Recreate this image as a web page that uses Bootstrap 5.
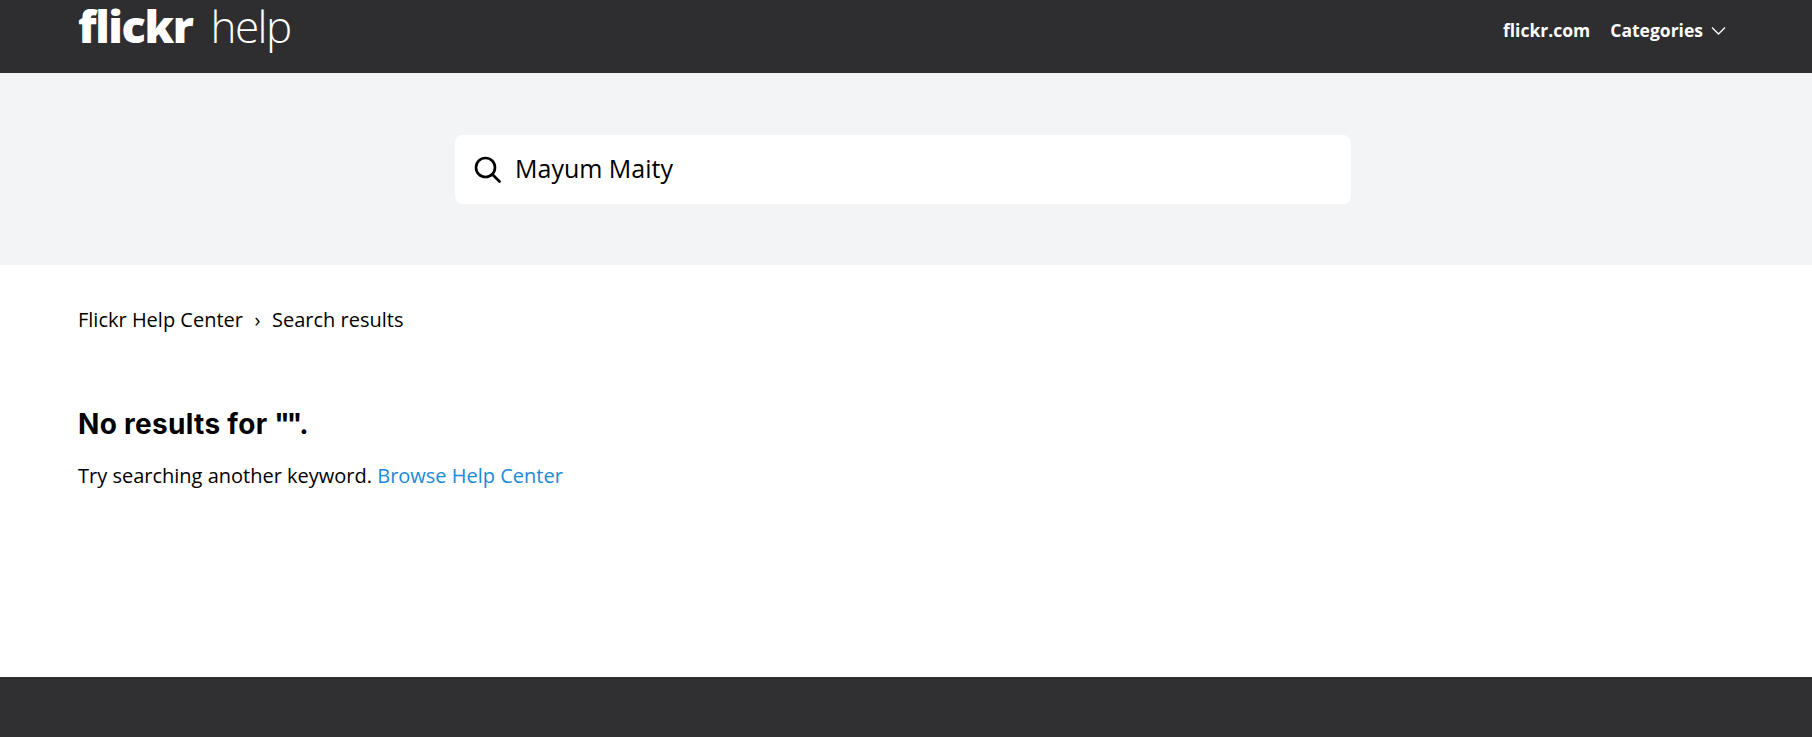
<!DOCTYPE html>
<html lang="en">
<head>
  <meta charset="UTF-8" />
  <link rel="stylesheet" href="https://cdn.jsdelivr.net/npm/bootstrap@5.3.3/dist/css/bootstrap.min.css">
  <script src="https://cdn.jsdelivr.net/npm/bootstrap@5.3.3/dist/js/bootstrap.bundle.min.js"></script>
  <title>Flickr Help Center</title>
  <style>
    html, body { height: 737px; overflow: hidden; }
    body {
      font-family: "Open Sans", sans-serif;
      color: #000;
      background: #fff;
      display: flex;
      flex-direction: column;
    }
    .top-bar {
      height: 73px;
      background: #2e2e30;
      padding: 0 78px;
      overflow: hidden;
    }
    .logo-wrap { gap: 18px; margin-top: -23px; line-height: 1; }
    .logo-main {
      font-family: "Open Sans", sans-serif;
      font-weight: 800;
      font-size: 45px;
      letter-spacing: -1.4px;
      color: #fff;
      text-decoration: none;
    }
    .logo-help {
      font-family: "Open Sans", sans-serif;
      font-weight: 300;
      font-size: 44px;
      letter-spacing: -1.5px;
      color: #fff;
    }
    .top-links { gap: 20px; padding-right: 8px; margin-top: -13px; }
    .top-link {
      font-size: 17.500px;
      font-weight: 700;
      color: #fff;
      text-decoration: none;
    }
    .search-band {
      height: 192px;
      background: #f3f4f6;
      padding-right: 6px;
    }
    .search-field {
      width: 896px;
      height: 69px;
      background: #fff;
      border-radius: 8px;
      padding-left: 19px;
      gap: 14px;
    }
    .search-field input {
      border: 0;
      outline: 0;
      padding: 0;
      flex: 1;
      font-size: 25px;
      color: #000;
      background: transparent;
    }
    .page-main { padding: 41px 78px 0; flex: 1; }
    .crumbs { font-size: 20px; line-height: 27px; gap: 11.500px; }
    .crumbs a { color: #000; text-decoration: none; }
    .no-results {
      font-family: "Inter", sans-serif;
      font-size: 28px;
      font-weight: 700;
      letter-spacing: .3px;
      line-height: 34px;
      margin: 74px 0 21px;
    }
    .quote-marks { letter-spacing: -3px; }
    .try-line { font-size: 20px; line-height: 27px; margin: 0; }
    .try-line a { color: #1c8ad6; text-decoration: none; }
    .page-foot { height: 60px; background: #303032; }
  </style>
</head>
<body>
  <header class="top-bar d-flex justify-content-between align-items-center">
    <div class="logo-wrap d-flex align-items-baseline">
      <a class="logo-main" href="#">flickr</a>
      <span class="logo-help">help</span>
    </div>
    <nav class="top-links d-flex align-items-center">
      <a class="top-link" href="#">flickr.com</a>
      <a class="top-link d-flex align-items-center gap-2" href="#">Categories
        <svg width="15" height="9" viewBox="0 0 15 9" fill="none" stroke="#fff" stroke-width="1.3"><path d="M1 1.5l6.500 6.500 6.500-6.500"/></svg>
      </a>
    </nav>
  </header>

  <section class="search-band d-flex justify-content-center align-items-center">
    <div class="search-field d-flex align-items-center">
      <svg width="27" height="27" viewBox="0 0 27 27" fill="none" stroke="#000" stroke-width="2.600"><circle cx="11.500" cy="11.500" r="9.500"/><path d="M18.500 18.500l7 7" stroke-linecap="round"/></svg>
      <input type="text" value="Mayum Maity" aria-label="Search">
    </div>
  </section>

  <main class="page-main">
    <div class="crumbs d-flex align-items-center">
      <a href="#">Flickr Help Center</a>
      <span>›</span>
      <a href="#">Search results</a>
    </div>
    <h2 class="no-results">No results for <span class="quote-marks">""</span>.</h2>
    <p class="try-line">Try searching another keyword. <a href="#">Browse Help Center</a></p>
  </main>

  <footer class="page-foot"></footer>
</body>
</html>
